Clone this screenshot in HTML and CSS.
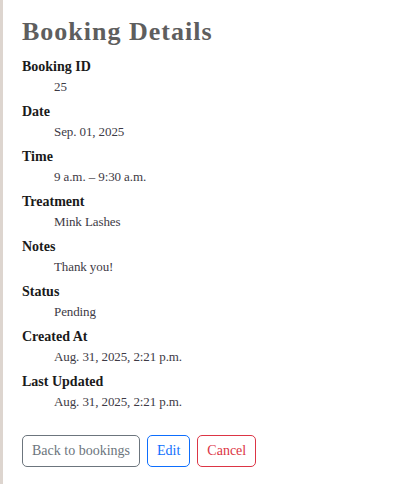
FILE: index.html
```html
<!DOCTYPE html>
<html lang="en">
<head>
<meta charset="utf-8">
<title>Booking Details</title>
<link rel="stylesheet" href="styles.css">
</head>
<body>
<main class="page">
  <h1 class="title">Booking Details</h1>
  <dl class="details">
    <dt>Booking ID</dt><dd>25</dd>
    <dt>Date</dt><dd>Sep. 01, 2025</dd>
    <dt>Time</dt><dd>9 a.m. – 9:30 a.m.</dd>
    <dt>Treatment</dt><dd>Mink Lashes</dd>
    <dt>Notes</dt><dd>Thank you!</dd>
    <dt>Status</dt><dd>Pending</dd>
    <dt>Created At</dt><dd>Aug. 31, 2025, 2:21 p.m.</dd>
    <dt>Last Updated</dt><dd>Aug. 31, 2025, 2:21 p.m.</dd>
  </dl>
  <div class="actions">
    <a class="btn btn-secondary" href="#">Back to bookings</a>
    <a class="btn btn-primary" href="#">Edit</a>
    <a class="btn btn-danger" href="#">Cancel</a>
  </div>
</main>
</body>
</html>
```

FILE: styles.css
```css
html, body {
  margin: 0;
  padding: 0;
  background: #fff;
  height: 100%;
}
body {
  font-family: "Liberation Serif", "DejaVu Serif", serif;
  color: #222;
}
.page {
  min-height: 100%;
  box-sizing: border-box;
  border-left: 3px solid #ddd5cf;
  padding: 16px 20px 0 19px;
}
.title {
  margin: 0 0 10px;
  font-size: 26px;
  line-height: 31px;
  font-weight: bold;
  color: #5e5e5e;
  letter-spacing: 1px;
}
.details {
  margin: 0;
}
.details dt {
  font-weight: bold;
  font-size: 14px;
  line-height: 20px;
  color: #1a1a1a;
}
.details dd {
  margin: 0 0 5px 32px;
  font-size: 13px;
  line-height: 20px;
  letter-spacing: -0.1px;
  color: #3d3a45;
  font-variant-numeric: oldstyle-nums;
}
.actions {
  display: flex;
  gap: 7px;
  margin-top: 23px;
}
.btn {
  display: inline-block;
  font-size: 14px;
  line-height: 20px;
  padding: 5px 9px;
  border: 1px solid;
  border-radius: 5px;
  text-decoration: none;
  background: #fff;
}
.btn-secondary { color: #6c757d; border-color: #6c757d; }
.btn-primary { color: #0d6efd; border-color: #0d6efd; }
.btn-danger { color: #dc3545; border-color: #dc3545; }
```
